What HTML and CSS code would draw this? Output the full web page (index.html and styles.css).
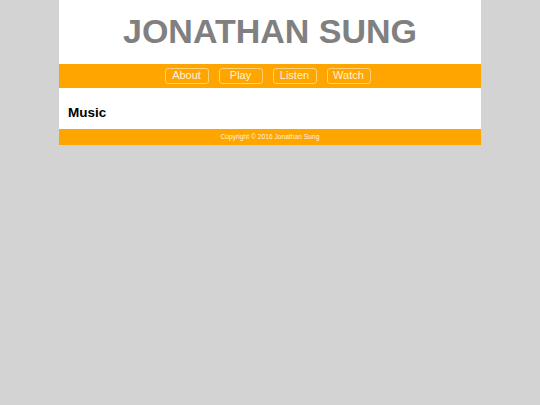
FILE: index.html
```html
<!DOCTYPE html>
<html>
<head>
<meta charset="utf-8">
<link rel="stylesheet" href="styles.css">
</head>
<body>
<div class="page">
  <header class="header">
    <h1 class="title">JONATHAN SUNG</h1>
  </header>
  <nav class="nav">
    <a class="nav-btn">About</a>
    <a class="nav-btn">Play</a>
    <a class="nav-btn">Listen</a>
    <a class="nav-btn">Watch</a>
  </nav>
  <main class="main">
    <h2 class="section-title">Music</h2>
  </main>
  <footer class="footer">Copyright © 2016 Jonathan Sung</footer>
</div>
</body>
</html>
```
FILE: styles.css
```css
html, body {
  margin: 0;
  padding: 0;
}
body {
  background: #d3d3d3;
  font-family: "Liberation Sans", Arial, sans-serif;
}
.page {
  width: 422px;
  margin: 0 auto;
}
.header {
  background: #fff;
  height: 64px;
  display: flex;
  align-items: center;
  justify-content: center;
}
.title {
  margin: 0 0 3px;
  font-size: 34px;
  font-weight: bold;
  color: #808080;
  line-height: 1;
}
.nav {
  background: #ffa500;
  height: 24px;
  display: flex;
  justify-content: center;
  align-items: flex-start;
  gap: 10px;
  padding: 4px 5px 0 0;
  box-sizing: border-box;
}
.nav-btn {
  width: 44px;
  height: 16px;
  box-sizing: border-box;
  border: 1px solid #ffd27a;
  border-radius: 3px;
  color: #fff3dc;
  font-size: 11px;
  line-height: 13px;
  text-align: center;
}
.main {
  background: #fff;
  height: 41px;
  display: flex;
  align-items: center;
  padding: 0 9px;
  box-sizing: border-box;
}
.section-title {
  margin: 0;
  font-size: 13.5px;
  font-weight: bold;
  color: #000;
  padding-top: 8px;
}
.footer {
  background: #ffa500;
  height: 16px;
  color: #fff3dc;
  font-size: 6.7px;
  line-height: 16px;
  text-align: center;
}
```
